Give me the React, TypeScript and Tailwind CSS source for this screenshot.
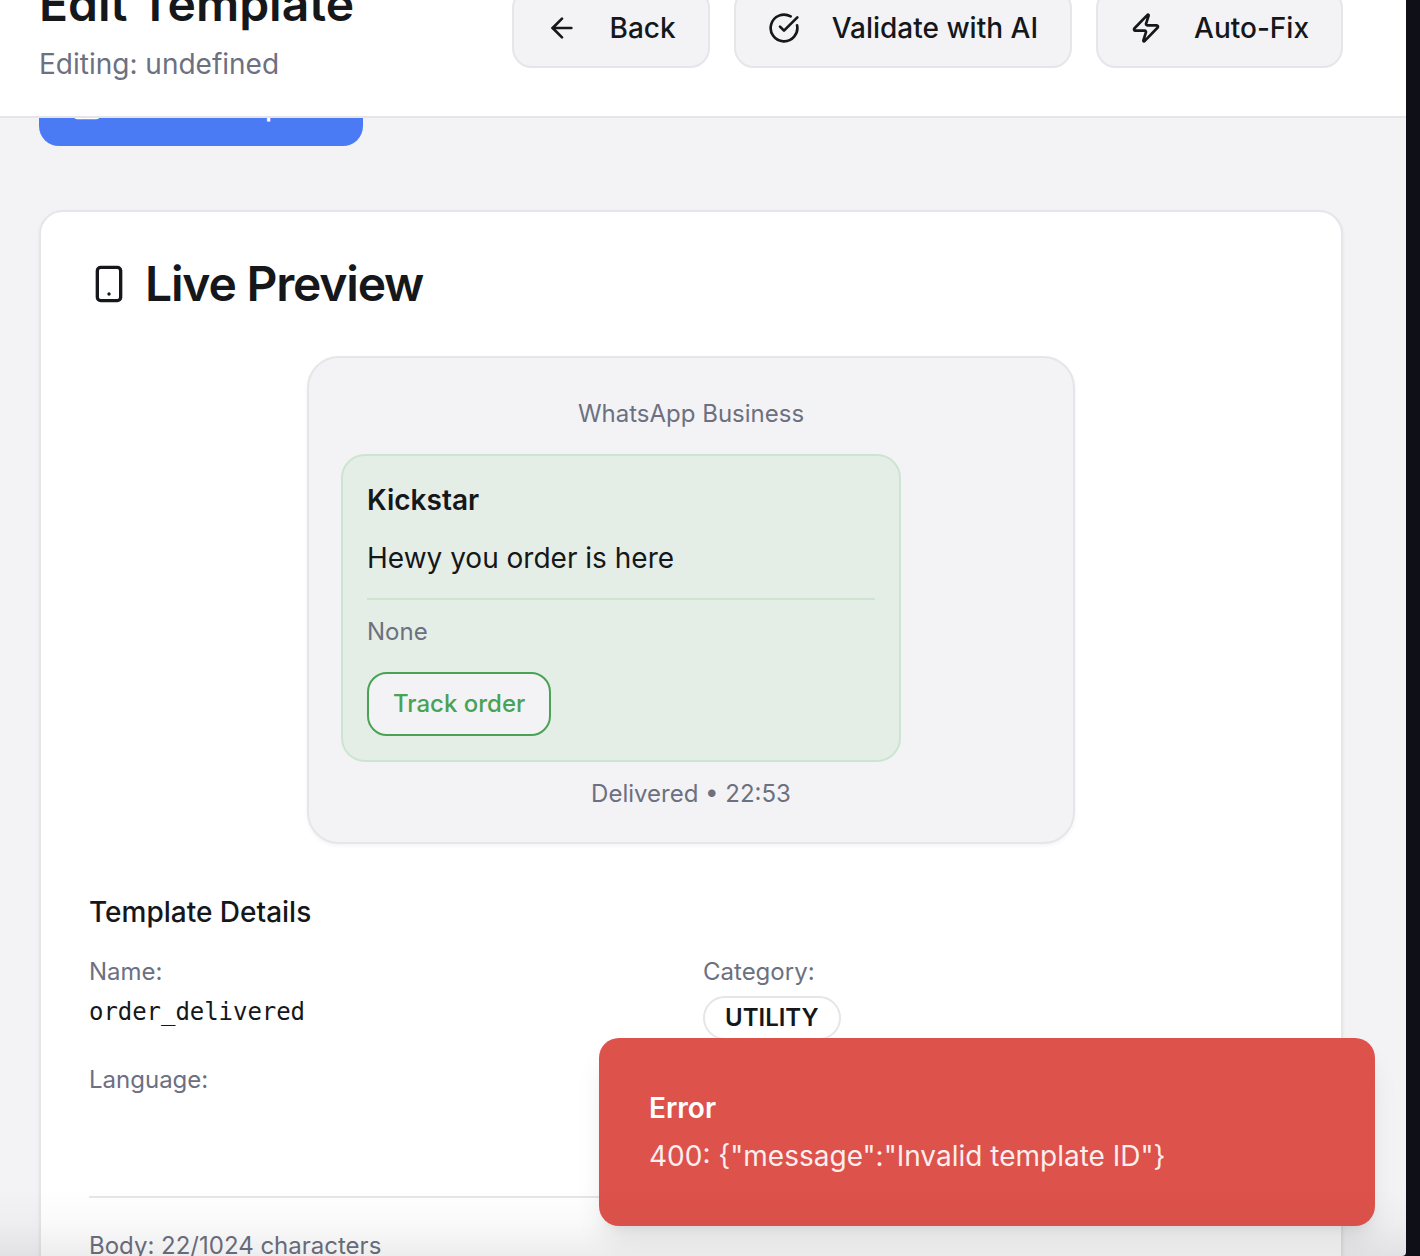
import React from "react";
import { ArrowLeft, CircleCheckBig, Zap, Smartphone, Save } from "lucide-react";

function HeaderButton({ icon: Icon, label }: { icon: React.ElementType; label: string }) {
  return (
    <button className="flex h-20 shrink-0 items-center gap-8 rounded-[20px] border-2 border-[#e5e5ea] bg-[#f3f3f6] px-8 font-medium whitespace-nowrap">
      <Icon className="size-8" strokeWidth={2} />
      {label}
    </button>
  );
}

export default function App() {
  return (
    <div className="relative flex h-[1256px] w-[1420px] overflow-hidden bg-[#0f1017] font-['Inter',sans-serif] text-[28px] leading-10 text-[#15171a]">
      <div className="relative flex w-[1406px] shrink-0 flex-col overflow-hidden rounded-br-[4px] bg-[#f3f3f6]">
        <header className="z-10 flex h-[118px] shrink-0 items-end justify-between border-b-2 border-[#e5e5ea] bg-white pr-[63px] pl-[39px]">
          <div className="mb-8">
            <h1 className="mb-2 text-[48px] leading-[64px] font-semibold whitespace-nowrap">Edit Template</h1>
            <p className="text-[#6c7080]">Editing: undefined</p>
          </div>
          <div className="mb-12 flex gap-6">
            <HeaderButton icon={ArrowLeft} label="Back" />
            <HeaderButton icon={CircleCheckBig} label="Validate with AI" />
            <HeaderButton icon={Zap} label="Auto-Fix" />
          </div>
        </header>

        <main className="-mt-[52px] flex flex-col gap-16 pr-[63px] pl-[39px]">
          <button className="flex h-20 w-[324px] shrink-0 items-center gap-8 rounded-[20px] bg-[#4a7bf5] px-8 font-medium whitespace-nowrap text-white">
            <Save className="size-8" />
            Save Template
          </button>

          <section className="flex h-[1200px] shrink-0 flex-col rounded-3xl border-2 border-[#e5e5ea] bg-white px-12 pt-10 shadow-[0_2px_4px_rgb(0_0_0/0.05)]">
            <h2 className="flex h-16 items-center gap-4 text-[48px] font-semibold tracking-[-0.025em]">
              <Smartphone className="size-10" />
              Live Preview
            </h2>

            <div className="mx-auto mt-10 flex h-[488px] w-[768px] flex-col rounded-[32px] border-2 border-[#e5e5ea] bg-[#f3f3f6] px-8 pt-10 text-2xl leading-8 text-[#6c7080] shadow-[0_2px_4px_rgb(0_0_0/0.05)]">
              <p className="text-center">WhatsApp Business</p>
              <div className="mt-6 flex h-[308px] w-[560px] flex-col items-start rounded-3xl border-2 border-[#cae6d0] bg-[#e5eee6] p-6">
                <p className="text-[28px] leading-10 font-semibold text-[#15171a]">Kickstar</p>
                <p className="mt-4 text-[28px] leading-[45px] text-[#15171a]">Hewy you order is here</p>
                <p className="mt-[17px] w-full border-t-2 border-[#cae6d0] pt-4">None</p>
                <button className="mt-6 h-16 shrink-0 rounded-[20px] border-2 border-[#4aa254] bg-[#f3f3f6] px-6 font-medium text-[#4aa254]">Track order</button>
              </div>
              <p className="mt-4 text-center">Delivered • 22:53</p>
            </div>

            <h3 className="mt-12 font-medium">Template Details</h3>
            <div className="mt-6 grid grid-cols-2 gap-x-6 text-2xl leading-8">
              <div className="h-[108px]">
                <p className="text-[#6c7080]">Name:</p>
                <p className="mt-2 font-['DejaVu_Sans_Mono',monospace] tracking-[-0.05px]">order_delivered</p>
              </div>
              <div>
                <p className="text-[#6c7080]">Category:</p>
                <span className="mt-2 flex h-11 w-fit items-center rounded-full border-2 border-[#e5e5ea] px-5 font-semibold">UTILITY</span>
              </div>
              <p className="text-[#6c7080]">Language:</p>
            </div>
            <p className="mt-[100px] border-t-2 border-[#e5e5ea] pt-8 text-2xl leading-8 text-[#6c7080]">Body: 22/1024 characters</p>
          </section>
        </main>

        <div className="absolute top-[1038px] left-[599px] z-20 h-[188px] w-[776px] rounded-[20px] bg-[#dd524b] px-[50px] pt-[50px] text-white shadow-[0_20px_30px_-6px_rgb(0_0_0/0.1),0_8px_12px_-8px_rgb(0_0_0/0.1)]">
          <p className="font-semibold">Error</p>
          <p className="mt-2 opacity-90">{'400: {"message":"Invalid template ID"}'}</p>
        </div>
        <div className="pointer-events-none absolute inset-x-0 bottom-0 z-30 h-[68px] bg-linear-to-t from-black/7 via-black/2 to-transparent" />
      </div>
    </div>
  );
}
